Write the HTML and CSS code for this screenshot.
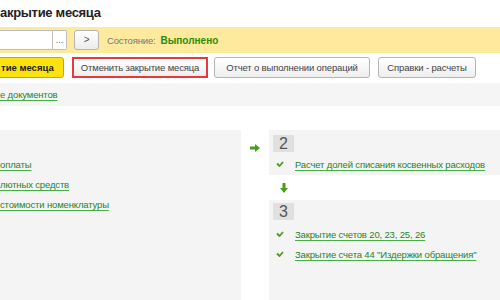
FILE: index.html
```html
<!DOCTYPE html>
<html lang="ru">
<head>
    <meta charset="UTF-8">
    <title>Закрытие месяца</title>
    <link rel="stylesheet" href="styles.css">
</head>
<body>
    <!-- Заголовок формы -->
    <h1 class="title">акрытие месяца</h1>

    <!-- Строка состояния -->
    <div class="statebar">
        <div class="field">
            <span class="field-input"></span>
            <span class="field-dots">...</span>
        </div>
        <span class="nav-btn">&gt;</span>
        <span class="state-label">Состояние:</span>
        <span class="state-value">Выполнено</span>
    </div>

    <!-- Кнопки -->
    <div class="toolbar">
        <span class="btn btn-main">тие месяца</span>
        <span class="btn btn-marked">Отменить закрытие месяца</span>
        <span class="btn btn-report">Отчет о выполнении операций</span>
        <span class="btn btn-ref">Справки - расчеты</span>
    </div>

    <div class="infobar">
        <a href="#" class="link">е документов</a>
    </div>

    <!-- Шаги закрытия -->
    <div class="steps">
        <div class="panel">
            <a href="#" class="link">оплаты</a>
            <a href="#" class="link">лютных средств</a>
            <a href="#" class="link">стоимости номенклатуры</a>
        </div>

        <div class="arrow-col">
            <svg width="10" height="8" viewBox="0 0 10 8"><path d="M0 2.5h5V0l5 4-5 4V5.5H0z" fill="#4a9e1e"/></svg>
        </div>

        <div class="right-col">
            <div class="block">
                <span class="num">2</span>
                <div class="row">
                    <svg class="check" width="8" height="6" viewBox="0 0 8 6"><path d="M1 2.5l2.5 2.5L7 1" stroke="#4a9e1e" stroke-width="1.8" fill="none"/></svg>
                    <a href="#" class="link">Расчет долей списания косвенных расходов</a>
                </div>
            </div>
            <div class="down">
                <svg width="8" height="10" viewBox="0 0 8 10"><path d="M2.5 0h3v5H8l-4 5-4-5h2.5z" fill="#4a9e1e"/></svg>
            </div>
            <div class="block block-last">
                <span class="num">3</span>
                <div class="row">
                    <svg class="check" width="8" height="6" viewBox="0 0 8 6"><path d="M1 2.5l2.5 2.5L7 1" stroke="#4a9e1e" stroke-width="1.8" fill="none"/></svg>
                    <a href="#" class="link">Закрытие счетов 20, 23, 25, 26</a>
                </div>
                <div class="row">
                    <svg class="check" width="8" height="6" viewBox="0 0 8 6"><path d="M1 2.5l2.5 2.5L7 1" stroke="#4a9e1e" stroke-width="1.8" fill="none"/></svg>
                    <a href="#" class="link">Закрытие счета 44 "Издержки обращения"</a>
                </div>
            </div>
        </div>
    </div>
</body>
</html>
```

FILE: styles.css
```css
/* Общие стили */
html, body {
    margin: 0;
    padding: 0;
    height: 300px;
    overflow: hidden;
    background: #fff;
    font-family: 'Liberation Sans', Arial, sans-serif;
    font-size: 9.5px;
    letter-spacing: -0.15px;
    color: #333;
}

.title {
    margin: 0;
    height: 27px;
    padding-top: 5px;
    box-sizing: border-box;
    font-size: 13px;
    letter-spacing: -0.3px;
    font-weight: bold;
    color: #222;
    line-height: 16px;
}

/* Желтая строка состояния */
.statebar {
    display: flex;
    align-items: center;
    height: 26px;
    background: #feea9c;
}

.field {
    display: flex;
    margin-left: -2px;
}

.field-input {
    width: 53px;
    height: 18px;
    background: #fff;
    border: 1px solid #bdbdbd;
    border-radius: 2px 0 0 2px;
}

.field-dots {
    width: 13px;
    height: 18px;
    line-height: 18px;
    text-align: center;
    background: #fff;
    border: 1px solid #bdbdbd;
    border-left: none;
    border-radius: 0 2px 2px 0;
    color: #666;
    letter-spacing: 0;
    font-size: 9px;
}

.nav-btn {
    width: 23px;
    height: 18px;
    margin-left: 7px;
    line-height: 18px;
    text-align: center;
    border: 1px solid #b5b5b5;
    border-radius: 3px;
    background: linear-gradient(#fff, #ececec);
    color: #555;
    font-size: 10px;
}

.state-label {
    margin-left: 8px;
    color: #777;
}

.state-value {
    margin-left: 5px;
    color: #2b8c0c;
    font-weight: bold;
    font-size: 10px;
    letter-spacing: 0;
}

/* Кнопки */
.toolbar {
    display: flex;
    align-items: center;
    height: 21px;
    margin-top: 4px;
}

.btn {
    box-sizing: border-box;
    height: 21px;
    line-height: 19px;
    text-align: center;
    border: 1px solid #b5b5b5;
    border-radius: 3px;
    background: linear-gradient(#fff, #eeeeee);
    color: #444;
    white-space: nowrap;
    margin-right: 8px;
}

.btn-main {
    width: 74px;
    margin-left: -10px;
    padding: 0 9px 0 10px;
    text-align: left;
    background: #fde20f;
    border-color: #c9a800;
    color: #222;
    font-weight: bold;
    letter-spacing: 0;
}

.btn-marked {
    width: 136px;
    border: 2px solid #e8383b;
    border-radius: 0;
    line-height: 17px;
    margin-right: 6px;
}

.btn-report {
    width: 156px;
}

.btn-ref {
    width: 98px;
}

.infobar {
    height: 23px;
    margin-top: 5px;
    padding-top: 6px;
    box-sizing: border-box;
    background: #f5f5f5;
}

.link {
    color: #21861f;
    text-decoration: underline;
    text-decoration-color: #45b044;
    text-underline-offset: 2px;
}

/* Шаги */
.steps {
    display: flex;
    margin-top: 24px;
    height: 170px;
}

.panel {
    width: 241px;
    background: #f4f4f4;
    display: flex;
    flex-direction: column;
    align-items: flex-start;
    gap: 9px;
    padding-top: 29px;
    box-sizing: border-box;
}

.arrow-col {
    width: 28px;
    padding: 13px 0 0 9px;
    box-sizing: border-box;
}

.right-col {
    flex: 1;
    display: flex;
    flex-direction: column;
}

.block {
    height: 45px;
    box-sizing: border-box;
    background: #f4f4f4;
    padding: 5px 0 0 4px;
}

.block-last {
    flex: 1;
    padding-top: 3px;
}

.num {
    display: inline-block;
    width: 21px;
    height: 17px;
    line-height: 17px;
    text-align: center;
    background: #e0e0e0;
    color: #555;
    font-size: 16px;
    letter-spacing: 0;
}

.row {
    display: flex;
    align-items: center;
    margin-top: 5px;
    height: 14px;
}

.block-last .row {
    margin-top: 6px;
}

.block-last .num + .row {
    margin-top: 7px;
}

.check {
    margin: 0 11px 0 3px;
}

.down {
    height: 25px;
    padding: 8px 0 0 11px;
    box-sizing: border-box;
}
```
